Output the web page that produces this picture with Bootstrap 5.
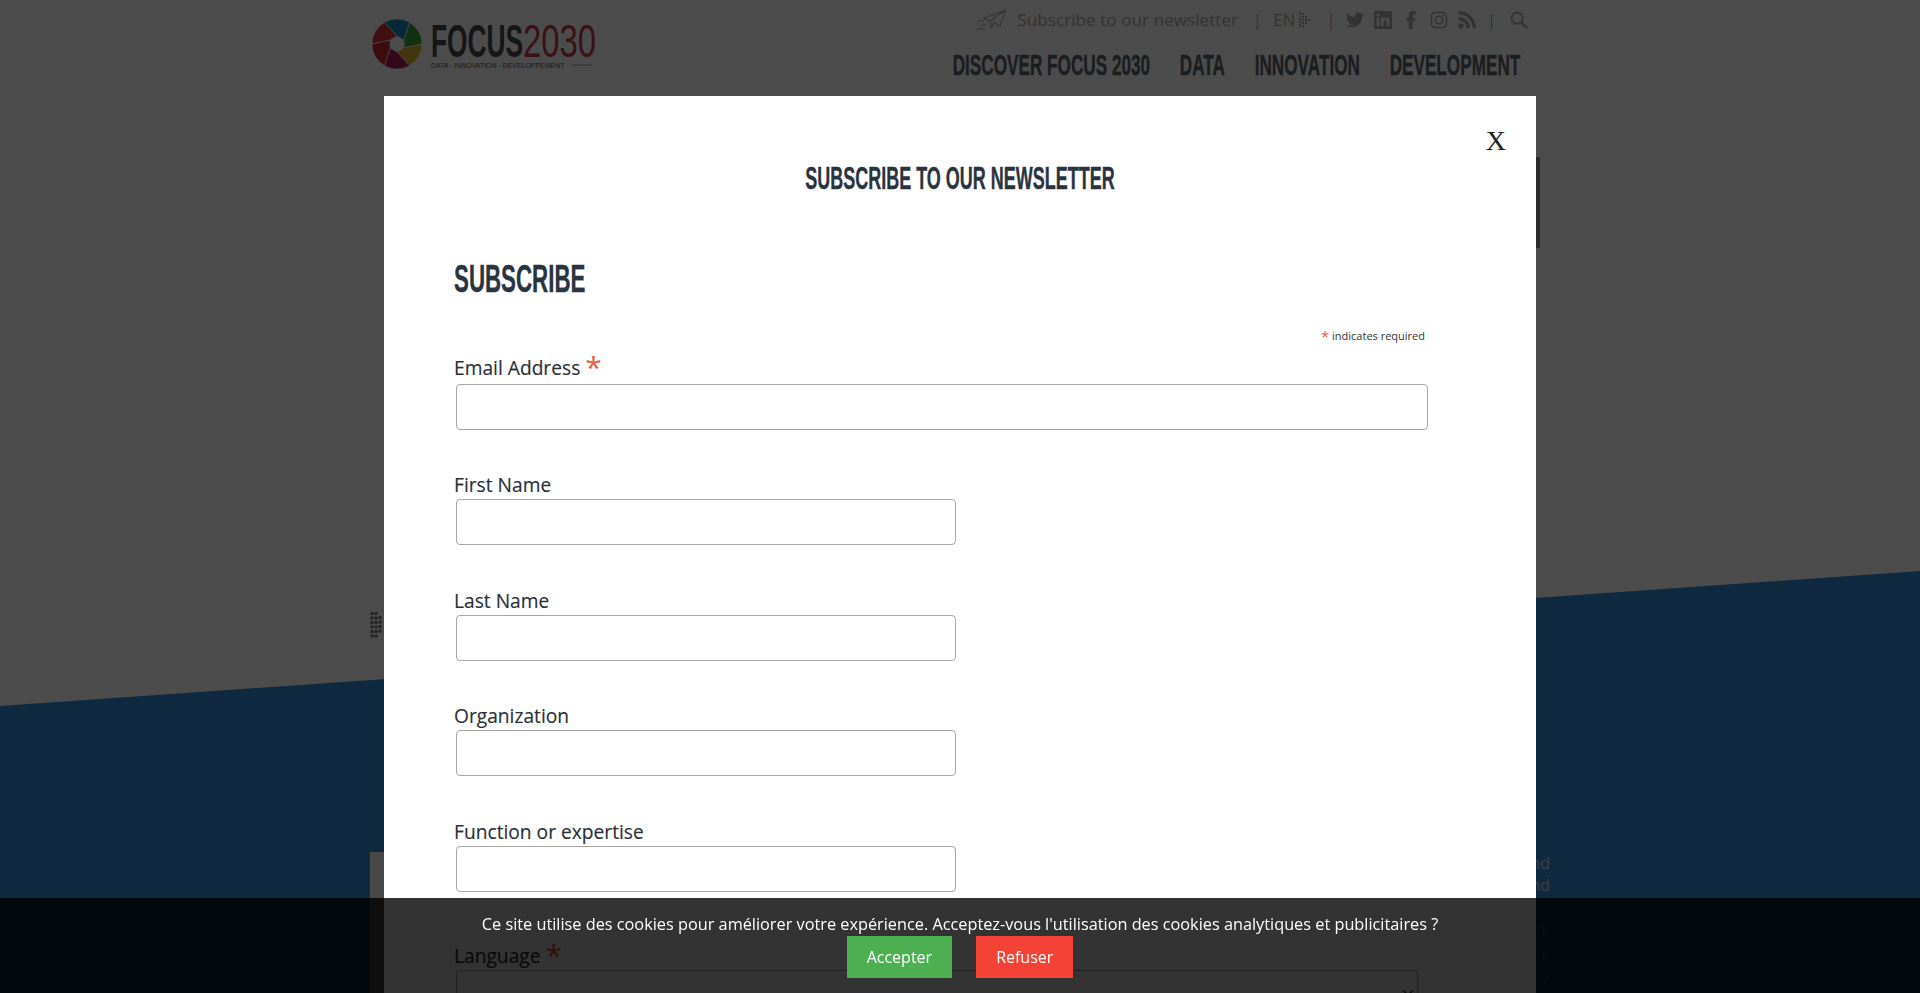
<!DOCTYPE html>
<html lang="en">
<head>
  <meta charset="UTF-8"/>
  <meta name="viewport" content="width=device-width, initial-scale=1"/>
  <title>Focus 2030 - Subscribe</title>
  <link href="https://cdn.jsdelivr.net/npm/bootstrap@5.3.0/dist/css/bootstrap.min.css" rel="stylesheet">
  <style>
    html, body { height: 100%; overflow: hidden; }
    body { font-family: "Open Sans", "Liberation Sans", sans-serif; color: #2a3038; background: #fff; }
    .din { font-family: "Liberation Sans", sans-serif; font-weight: 700; -webkit-text-stroke: .4px currentColor; }

    /* page behind the popup */
    .site-page { position: relative; height: 993px; overflow: hidden; }
    .site-band { position: absolute; inset: 0; background: #358cd6; clip-path: polygon(0 706px, 100% 571px, 100% 100%, 0 100%); }
    .site-wrap { position: relative; width: 1180px; margin-left: 370px; }
    .site-logo { display: block; width: 230px; height: 56px; margin-top: 17px; }
    .logo-text { font-family: "Liberation Sans", sans-serif; }
    .site-right { min-width: 0; }
    .top-row { height: 40px; font-size: 17.2px; color: #aaa; gap: 10px; padding-right: 22px; }
    .top-row svg { display: block; fill: #aaa; }
    .top-row svg.line-icon { fill: none; }
    .top-sep { font-size: 16px; margin: 0 1px 0 5px; }
    .top-sep.sep-end { margin: 0 4px 0 1px; }
    .main-menu { gap: 52px; margin-top: 6px; font-size: 30px; line-height: 38px; color: #5d646b; white-space: nowrap; transform: scaleX(.572); transform-origin: right center; padding-right: 52px; justify-content: flex-end; }
    .main-menu a { color: inherit; text-decoration: none; }
    .slide-bar { position: absolute; left: 1536px; top: 157px; width: 4px; height: 91px; background: #8f8f8f; }
    .dots-mark { position: absolute; left: 370px; top: 610px; }
    .side-card { position: absolute; left: 370px; top: 852px; width: 300px; height: 200px; background: #f1f1f1; }
    .side-text { position: absolute; right: 370px; top: 852px; text-align: right; font-size: 16px; line-height: 22px; color: #c8d6e0; }
    .side-gap { height: 23px; }
    .side-text-low { line-height: 24.5px; }

    /* popup */
    .popup-layer { background: rgba(0, 0, 0, .7); overflow: hidden !important; }
    .popup-box { position: relative; width: 1152px; margin: 96px 0 0 384px; background: #fff; height: 1100px; padding: 0 70px; }
    .popup-close { position: absolute; right: 30px; top: 25px; font-family: "Liberation Serif", serif; font-size: 28px; color: #222; line-height: 40px; text-decoration: none; }
    .popup-title { font-size: 32px; line-height: 36px; color: #2a3440; text-align: center; margin: 0; padding-top: 64px; transform: scaleX(.562); }
    .form-head { font-size: 39px; line-height: 44px; color: #2a3440; margin: 61px 0 0; transform: scaleX(.572); transform-origin: left center; }
    .req-note { font-size: 11px; line-height: 16px; color: #333; text-align: right; width: 971px; margin-top: 27px; margin-bottom: 7.5px; }
    .req-note .req-star { font-size: 15px; line-height: 16px; vertical-align: -2px; }
    .req-star { color: #e85c41; }
    .form-field { margin-bottom: 42.6px; }
    .form-field .form-label { display: block; font-size: 19.2px; line-height: 26px; font-weight: 500; margin: 0 0 1px; color: #2a3038; -webkit-text-stroke: .15px currentColor; }
    .form-field .req-star { font-size: 30px; line-height: 29px; font-weight: 400; vertical-align: -3px; -webkit-text-stroke: 0; }
    .form-field .form-control, .form-field .form-select { height: 46px; margin-left: 2px; border: 1px solid #a6a6a6; border-radius: 4px; box-shadow: none; }
    .form-field .form-select { background-position: right 1px center; }
    .form-field.field-first .form-label { margin-bottom: 3px; }
    .form-field.field-select { padding-top: 6px; }
    .field-wide { width: 972px; }
    .field-half { width: 500px; }
    .field-lang { width: 962px; }

    /* cookie bar */
    .cookie-bar { height: 95px; background: rgba(0, 0, 0, .8); color: #fff; padding-top: 14px; font-size: 16.3px; line-height: 24px; text-align: center; z-index: 1060; }
    .cookie-btns { gap: 24px; }
    .cookie-btns .btn { height: 42px; padding: 9px 20px; font-size: 16px; line-height: 24px; color: #fff; border: 0; border-radius: 0; }
    .btn-accept { background: #4caf50; }
    .btn-refuse { background: #f44336; }
  </style>
</head>
<body>
  <div class="site-page">
    <div class="site-band"></div>
    <div class="side-card"></div>
    <div class="side-text">and<br>and<div class="side-gap"></div><div class="side-text-low">k<br>k<br>r</div></div>
    <div class="slide-bar"></div>
    <svg class="dots-mark" width="14" height="30" viewBox="0 0 14 30" aria-hidden="true">
      <g stroke="#777" stroke-width="3" stroke-dasharray="3 1.5" fill="none">
        <path d="M2 2v26M6 2v26M10 6v18"/>
      </g>
    </svg>

    <header class="site-wrap d-flex justify-content-between">
      <svg class="site-logo flex-shrink-0" viewBox="0 0 230 56" aria-label="Focus 2030">
        <g transform="translate(27 27) rotate(-30)" stroke="#fff" stroke-width=".6">
          <path fill="#3fa535" d="M8 0L21.65-12.5A25 25 0 0 1 21.65 12.5L4 6.93Z"/>
          <path fill="#e0b12c" transform="rotate(60)" d="M8 0L21.65-12.5A25 25 0 0 1 21.65 12.5L4 6.93Z"/>
          <path fill="#b0195a" transform="rotate(120)" d="M8 0L21.65-12.5A25 25 0 0 1 21.65 12.5L4 6.93Z"/>
          <path fill="#c9252f" transform="rotate(180)" d="M8 0L21.65-12.5A25 25 0 0 1 21.65 12.5L4 6.93Z"/>
          <path fill="#d9343a" transform="rotate(240)" d="M8 0L21.65-12.5A25 25 0 0 1 21.65 12.5L4 6.93Z"/>
          <path fill="#1a86b8" transform="rotate(300)" d="M8 0L21.65-12.5A25 25 0 0 1 21.65 12.5L4 6.93Z"/>
        </g>
        <text class="logo-text" transform="translate(61 40) scale(.56 1)" font-weight="700" font-size="47" fill="#4a4a4a">FOCUS</text>
        <text class="logo-text" transform="translate(153 40) scale(.7 1)" font-size="47" fill="#c23a4c">2030</text>
        <text class="logo-text" transform="translate(61 51) scale(.87 1)" font-size="8" fill="#555">DATA - INNOVATION - DEVELOPPEMENT</text>
        <path d="M202 48h20" stroke="#777" stroke-width=".7"/>
      </svg>

      <div class="site-right flex-grow-1">
        <div class="top-row d-flex justify-content-end align-items-center">
          <svg class="line-icon" width="30" height="22" viewBox="0 0 30 22" aria-hidden="true"><g stroke="#aaa" stroke-width="1.1" fill="none"><path d="M29 1L7 9l6 3zM29 1L13 12l1 7 3-5 6 3zM14 19l-1-7"/><path d="M1 12h6M3 16h6M0 20h8"/></g></svg>
          <span>Subscribe to our newsletter</span>
          <span class="top-sep">|</span>
          <span class="d-flex align-items-center gap-1">EN
            <svg width="12" height="16" viewBox="0 0 12 16" aria-hidden="true"><g stroke="#aaa" stroke-width="2" stroke-dasharray="2 1" fill="none"><path d="M1 0v16M4 1v14M7 4v8M10 7v2"/></g></svg>
          </span>
          <span class="top-sep">|</span>
          <svg width="18" height="18" viewBox="0 0 24 24" aria-hidden="true"><path d="M23.95 4.57a10 10 0 0 1-2.82.78 4.96 4.96 0 0 0 2.16-2.72c-.95.55-2 .96-3.12 1.19a4.92 4.92 0 0 0-8.38 4.48C7.69 8.1 4.07 6.13 1.64 3.16a4.82 4.82 0 0 0-.67 2.48c0 1.71.87 3.21 2.19 4.1a4.9 4.9 0 0 1-2.23-.62v.06a4.92 4.92 0 0 0 3.95 4.83 5 5 0 0 1-2.21.08 4.94 4.94 0 0 0 4.6 3.42A9.87 9.87 0 0 1 0 19.54a14 14 0 0 0 7.56 2.21c9.05 0 14-7.5 14-14 0-.21 0-.42-.02-.63a9.94 9.94 0 0 0 2.46-2.55z"/></svg>
          <svg width="18" height="18" viewBox="0 0 24 24" aria-hidden="true"><path d="M20.45 20.45h-3.56v-5.57c0-1.33-.03-3.04-1.85-3.04-1.85 0-2.14 1.45-2.14 2.94v5.67H9.35V9h3.41v1.56h.05c.48-.9 1.64-1.85 3.37-1.85 3.6 0 4.27 2.37 4.27 5.46v6.28zM5.34 7.43a2.06 2.06 0 1 1 0-4.13 2.06 2.06 0 0 1 0 4.13zM7.12 20.45H3.56V9h3.56v11.45zM22.22 0H1.77C.79 0 0 .77 0 1.73v20.54C0 23.23.79 24 1.77 24h20.45c.98 0 1.78-.77 1.78-1.73V1.73C24 .77 23.2 0 22.22 0z"/></svg>
          <svg width="18" height="18" viewBox="0 0 24 24" aria-hidden="true"><path d="M14 8.5V6c0-1 .5-1.5 1.7-1.5H18V0h-3.6C10.9 0 9 2 9 5.2v3.3H6V13h3v11h5V13h3.4l.6-4.5z"/></svg>
          <svg class="line-icon" width="18" height="18" viewBox="0 0 24 24" aria-hidden="true"><g stroke="#aaa" stroke-width="2" fill="none"><rect x="2" y="2" width="20" height="20" rx="5"/><circle cx="12" cy="12" r="5"/></g><circle cx="18" cy="6" r="1.4" fill="#aaa"/></svg>
          <svg width="18" height="18" viewBox="0 0 24 24" aria-hidden="true"><circle cx="4" cy="20" r="3.5"/><path d="M1 8v4.5A10.5 10.5 0 0 1 11.5 23H16A15 15 0 0 0 1 8zM1 0v4.5A18.5 18.5 0 0 1 19.5 23H24A23 23 0 0 0 1 0z"/></svg>
          <span class="top-sep sep-end">|</span>
          <svg class="line-icon" width="18" height="18" viewBox="0 0 24 24" aria-hidden="true"><g stroke="#aaa" fill="none"><circle cx="9.5" cy="9.5" r="7.5" stroke-width="2.4"/><path d="M15 15l8 8" stroke-width="3.4"/></g></svg>
        </div>
        <nav class="main-menu din d-flex">
          <a href="#">DISCOVER FOCUS 2030</a>
          <a href="#">DATA</a>
          <a href="#">INNOVATION</a>
          <a href="#">DEVELOPMENT</a>
        </nav>
      </div>
    </header>
  </div>

  <div class="modal d-block popup-layer" tabindex="-1">
    <div class="popup-box">
      <a class="popup-close" href="#">X</a>
      <h2 class="popup-title din">SUBSCRIBE TO OUR NEWSLETTER</h2>
      <form>
        <h2 class="form-head din">SUBSCRIBE</h2>
        <div class="req-note"><span class="req-star">*</span> indicates required</div>
        <div class="form-field field-first">
          <label class="form-label" for="mce-email">Email Address <span class="req-star">*</span></label>
          <input type="email" class="form-control field-wide" id="mce-email">
        </div>
        <div class="form-field">
          <label class="form-label" for="mce-first">First Name</label>
          <input type="text" class="form-control field-half" id="mce-first">
        </div>
        <div class="form-field">
          <label class="form-label" for="mce-last">Last Name</label>
          <input type="text" class="form-control field-half" id="mce-last">
        </div>
        <div class="form-field">
          <label class="form-label" for="mce-org">Organization</label>
          <input type="text" class="form-control field-half" id="mce-org">
        </div>
        <div class="form-field">
          <label class="form-label" for="mce-func">Function or expertise</label>
          <input type="text" class="form-control field-half" id="mce-func">
        </div>
        <div class="form-field field-select">
          <label class="form-label" for="mce-lang">Language <span class="req-star">*</span></label>
          <select class="form-select field-lang" id="mce-lang"><option></option></select>
        </div>
      </form>
    </div>
  </div>

  <div class="cookie-bar fixed-bottom">
    <div>Ce site utilise des cookies pour améliorer votre expérience. Acceptez-vous l'utilisation des cookies analytiques et publicitaires ?</div>
    <div class="cookie-btns d-flex justify-content-center">
      <button type="button" class="btn btn-accept">Accepter</button>
      <button type="button" class="btn btn-refuse">Refuser</button>
    </div>
  </div>

  <script src="https://cdn.jsdelivr.net/npm/bootstrap@5.3.0/dist/js/bootstrap.bundle.min.js"></script>
</body>
</html>
